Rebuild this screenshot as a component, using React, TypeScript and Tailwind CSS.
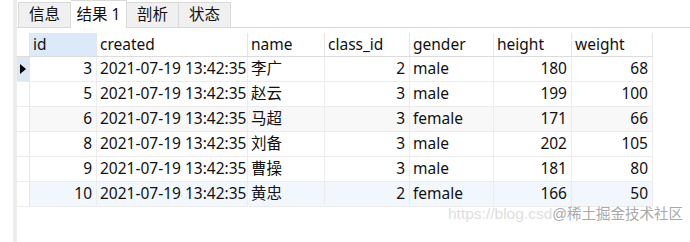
import React from "react";

const cols = [
  { key: "id", w: 67, align: "right" },
  { key: "created", w: 151, align: "left" },
  { key: "name", w: 77, align: "left" },
  { key: "class_id", w: 85, align: "right" },
  { key: "gender", w: 84, align: "left" },
  { key: "height", w: 78, align: "right" },
  { key: "weight", w: 81, align: "right" },
];

const rows = [
  ["3", "2021-07-19 13:42:35", "李广", "2", "male", "180", "68"],
  ["5", "2021-07-19 13:42:35", "赵云", "3", "male", "199", "100"],
  ["6", "2021-07-19 13:42:35", "马超", "3", "female", "171", "66"],
  ["8", "2021-07-19 13:42:35", "刘备", "3", "male", "202", "105"],
  ["9", "2021-07-19 13:42:35", "曹操", "3", "male", "181", "80"],
  ["10", "2021-07-19 13:42:35", "黄忠", "2", "female", "166", "50"],
];

const font = { fontFamily: '"Noto Sans", "Noto Sans CJK SC", sans-serif' };

export default function App() {
  return (
    <div
      className="relative w-[690px] h-[242px] bg-white overflow-hidden text-[15.5px] text-[#111] flex"
      style={font}
    >
      <div className="w-[13px] shrink-0 bg-white" />
      <div className="w-[4px] shrink-0 bg-[#ededed]" />
      <div className="flex-1 flex flex-col">
        {/* tabs */}
        <div className="flex items-end h-[28px] border-b border-[#d9d9d9] pl-[1px] text-[15.5px]">
          <div className="w-[53px] h-[25px] flex items-center justify-center bg-[#f0f0f0] border border-b-0 border-[#d9d9d9]">
            信息
          </div>
          <div className="w-[56px] h-[28px] -mb-px flex items-center justify-center bg-white border border-b-0 border-[#d9d9d9] border-l-0">
            结果 1
          </div>
          <div className="w-[52px] h-[25px] flex items-center justify-center bg-[#f0f0f0] border border-b-0 border-l-0 border-[#d9d9d9]">
            剖析
          </div>
          <div className="w-[52px] h-[25px] flex items-center justify-center bg-[#f0f0f0] border border-b-0 border-l-0 border-[#d9d9d9]">
            状态
          </div>
        </div>
        <div className="h-[5px]" />
        {/* table */}
        <div className="flex flex-col w-[636px]">
          <div className="flex h-[24px] border-b border-[#dcdcdc]">
            <div className="w-[13px] shrink-0 border-r border-[#e6e6e6]" />
            {cols.map((c, i) => (
              <div
                key={c.key}
                style={{ width: c.w }}
                className={`shrink-0 flex items-center pl-[3px] border-r border-[#e6e6e6] ${
                  i === 0 ? "bg-[#dce9f8]" : ""
                }`}
              >
                {c.key}
              </div>
            ))}
          </div>
          {rows.map((r, ri) => (
            <div
              key={ri}
              className={`flex h-[25px] border-b border-[#ececec] ${
                ri === 5 ? "bg-[#f2f7fd]" : ri === 2 ? "bg-[#f8f8f8]" : "bg-white"
              }`}
            >
              <div
                className={`w-[13px] shrink-0 border-r border-[#e6e6e6] flex items-center justify-center ${
                  ri === 0 ? "bg-[#dde8f5]" : "bg-white"
                }`}
              >
                {ri === 0 && (
                  <svg width="6" height="10" viewBox="0 0 6 10">
                    <path d="M0 0 L6 5 L0 10 Z" fill="#000" />
                  </svg>
                )}
              </div>
              {cols.map((c, ci) => (
                <div
                  key={c.key}
                  style={{ width: c.w }}
                  className={`shrink-0 flex items-center whitespace-nowrap border-r border-[#ececec] ${
                    c.align === "right" ? "justify-end pr-[4px] overflow-hidden" : "pl-[3px]"
                  }`}
                >
                  {r[ci]}
                </div>
              ))}
            </div>
          ))}
        </div>
      </div>
      <div
        className="absolute left-[448px] top-[202px] whitespace-nowrap flex items-baseline"
        style={{ fontFamily: '"Liberation Sans", "Noto Sans CJK SC", sans-serif' }}
      >
        <span className="text-[#dedede] text-[15.5px]">https://blog.csd</span>
        <span className="text-[#a9a9a9] text-[14.5px]" style={{ textShadow: "0 0 1px #fff" }}>
          @稀土掘金技术社区
        </span>
      </div>
    </div>
  );
}
